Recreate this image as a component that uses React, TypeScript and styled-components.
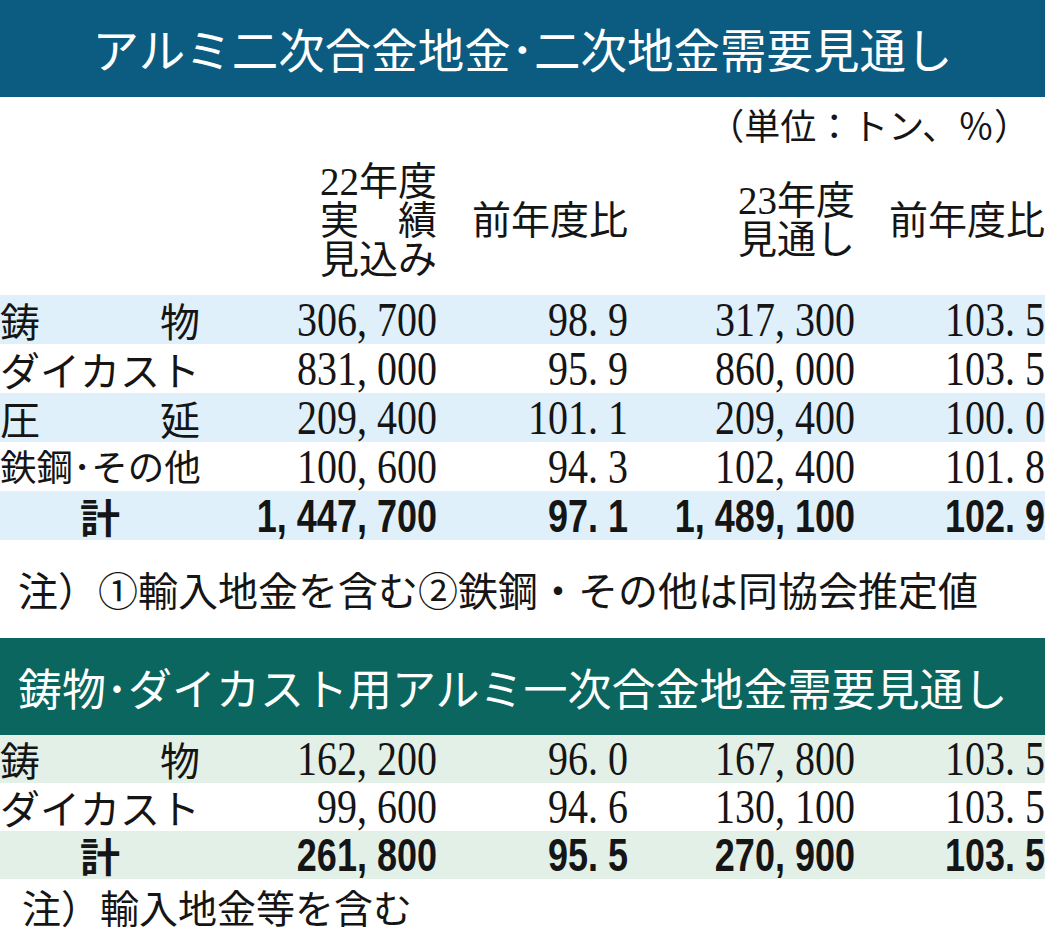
import React from 'react'
import styled, { createGlobalStyle } from 'styled-components'

const GlobalStyle = createGlobalStyle`
  html, body {
    margin: 0;
    padding: 0;
    background: #fff;
  }
  body {
    font-family: 'Liberation Serif', 'Noto Sans CJK JP', serif;
    color: #151515;
  }
`

const Page = styled.div`
  width: 1045px;
  display: flex;
  flex-direction: column;
`

const TitleBar = styled.div<{ $bg: string; $size: number; $pad: number; $center?: boolean }>`
  height: 97px;
  display: flex;
  align-items: center;
  justify-content: ${(p) => (p.$center ? 'center' : 'flex-start')};
  padding-left: ${(p) => p.$pad}px;
  box-sizing: border-box;
  background: ${(p) => p.$bg};
  color: #fff;
  font-family: 'Noto Sans CJK JP', sans-serif;
  font-size: ${(p) => p.$size}px;
  line-height: 1;
  white-space: nowrap;
`

const UnitRow = styled.div`
  height: 53px;
  display: flex;
  justify-content: flex-end;
  padding: 5px 15px 0 0;
  box-sizing: border-box;
  font-family: 'Noto Sans CJK JP', sans-serif;
  font-size: 36px;
  line-height: 44px;
`

const Grid = styled.div`
  display: grid;
  grid-template-columns: 200px 237px 191px 227px 190px;
`

const HeadRow = styled(Grid)`
  height: 140px;
  align-items: center;
  margin-bottom: 5px;
  font-size: 39px;
  line-height: 39px;
`

const HeadCell = styled.div<{ $col: number }>`
  grid-column: ${(p) => p.$col};
  text-align: right;
  white-space: pre-line;
`

const Row = styled(Grid)<{ $bg: string; $h: number }>`
  height: ${(p) => p.$h}px;
  align-items: center;
  background: ${(p) => p.$bg};
`

const Label = styled.div<{ $total?: boolean; $size?: number }>`
  font-family: 'Noto Sans CJK JP', sans-serif;
  font-size: ${(p) => p.$size ?? 40}px;
  line-height: 1;
  white-space: pre;
  padding-left: ${(p) => (p.$total ? 80 : 0)}px;
  font-weight: ${(p) => (p.$total ? 700 : 400)};
`

const Cell = styled.div`
  text-align: right;
  line-height: 1;
`

const Num = styled.span<{ $bold?: boolean }>`
  display: inline-block;
  font-family: ${(p) => (p.$bold ? "'Liberation Sans', sans-serif" : "'Liberation Serif', serif")};
  font-weight: ${(p) => (p.$bold ? 700 : 400)};
  font-size: ${(p) => (p.$bold ? 36 : 40)}px;
  line-height: 1;
  transform: scaleY(${(p) => (p.$bold ? 1.3 : 1.22)});
`

const Punct = styled.span`
  display: inline-block;
  width: 20px;
  text-align: left;
`

const Note = styled.div<{ $h: number; $pad: number; $size: number }>`
  height: ${(p) => p.$h}px;
  display: flex;
  align-items: center;
  padding-left: ${(p) => p.$pad}px;
  font-family: 'Noto Sans CJK JP', sans-serif;
  font-size: ${(p) => p.$size}px;
  line-height: 1;
  white-space: nowrap;
`

type Line = {
  label: string
  vals: string[]
  total?: boolean
  size?: number
  shaded: boolean
}

const renderNum = (s: string) =>
  s.split(/([,.])/).map((part, i) =>
    part === ',' || part === '.' ? <Punct key={i}>{part}</Punct> : part
  )

const primary: Line[] = [
  { label: '鋳　　　物', vals: ['306,700', '98.9', '317,300', '103.5'], shaded: true },
  { label: 'ダイカスト', vals: ['831,000', '95.9', '860,000', '103.5'], shaded: false },
  { label: '圧　　　延', vals: ['209,400', '101.1', '209,400', '100.0'], shaded: true },
  { label: '鉄鋼･その他', size: 36.5, vals: ['100,600', '94.3', '102,400', '101.8'], shaded: false },
  { label: '計', total: true, vals: ['1,447,700', '97.1', '1,489,100', '102.9'], shaded: true },
]

const casting: Line[] = [
  { label: '鋳　　　物', vals: ['162,200', '96.0', '167,800', '103.5'], shaded: true },
  { label: 'ダイカスト', vals: ['99,600', '94.6', '130,100', '103.5'], shaded: false },
  { label: '計', total: true, vals: ['261,800', '95.5', '270,900', '103.5'], shaded: true },
]

const DataRows = ({ lines, tint, h }: { lines: Line[]; tint: string; h: number }) => (
  <>
    {lines.map((l, i) => (
      <Row key={i} $bg={l.shaded ? tint : '#fff'} $h={h}>
        <Label $total={l.total} $size={l.size}>
          {l.label}
        </Label>
        {l.vals.map((v, j) => (
          <Cell key={j}>
            <Num $bold={l.total}>{renderNum(v)}</Num>
          </Cell>
        ))}
      </Row>
    ))}
  </>
)

const App = () => {
  return (
    <Page>
      <GlobalStyle />
      <TitleBar $bg="#0b5c80" $size={46.5} $pad={0} $center>
        アルミ二次合金地金･二次地金需要見通し
      </TitleBar>
      <UnitRow>（単位：トン、％）</UnitRow>
      <HeadRow>
        <HeadCell $col={2}>{'22年度\n実　績\n見込み'}</HeadCell>
        <HeadCell $col={3}>前年度比</HeadCell>
        <HeadCell $col={4}>{'23年度\n見通し'}</HeadCell>
        <HeadCell $col={5}>前年度比</HeadCell>
      </HeadRow>
      <DataRows lines={primary} tint="#dff0fa" h={49} />
      <Note $h={98} $pad={18} $size={40}>
        注）①輸入地金を含む②鉄鋼・その他は同協会推定値
      </Note>
      <TitleBar $bg="#0a665e" $size={44} $pad={18}>
        鋳物･ダイカスト用アルミ一次合金地金需要見通し
      </TitleBar>
      <DataRows lines={casting} tint="#e2f0e7" h={48} />
      <Note $h={54} $pad={22} $size={39}>
        注）輸入地金等を含む
      </Note>
    </Page>
  )
}

export default App
